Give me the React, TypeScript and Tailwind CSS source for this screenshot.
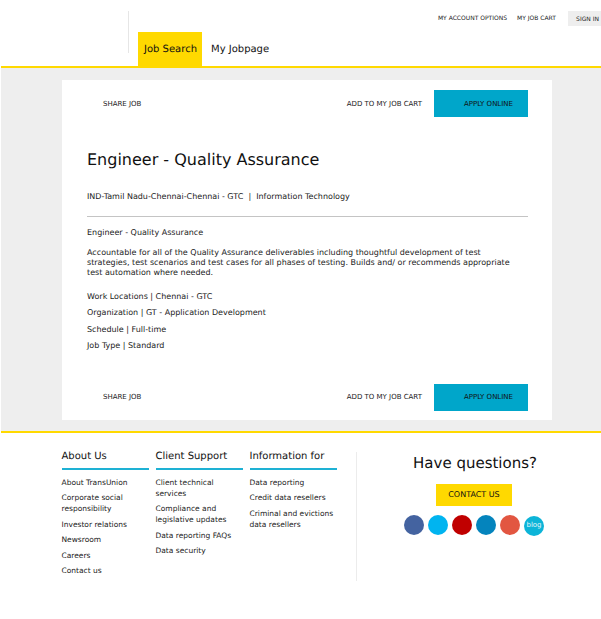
import React from 'react';

const ActionBar = ({ className }: { className: string }) => (
  <div className={`flex items-center ${className}`}>
    <span className="ml-[16px] pt-[1px] text-[7px] text-[#222222]">SHARE JOB</span>
    <span className="ml-auto mr-[12px] pt-[1px] text-[7px] text-[#222222]">ADD TO MY JOB CART</span>
    <div className="w-[94px] h-[27px] bg-[#00a6ca] flex items-center justify-end pr-[15px] pt-[1px] text-[7px] text-[#111111]">APPLY ONLINE</div>
  </div>
);

const FooterColumn = ({ title, links }: { title: string; links: string[] }) => (
  <div className="w-[87px] mr-[7px]">
    <h4 className="text-[10px] leading-[12px] text-[#111111] pb-[5px] border-b-2 border-[#1eb1d4] mb-[7px]">{title}</h4>
    <ul className="flex flex-col gap-[4.5px]">
      {links.map(l => (
        <li key={l} className="text-[7.5px] leading-[11px] text-[#222222]">{l}</li>
      ))}
    </ul>
  </div>
);

const App: React.FC = () => {
  const socials = ['#4463a0', '#00b4f0', '#c00000', '#0484bd', '#e25641'];

  return (
    <div className="font-['DejaVu_Sans',sans-serif] [text-rendering:geometricPrecision] w-[601px] h-[619px] pl-px bg-white overflow-hidden">
      {/* Header */}
      <header className="h-[68px] border-b-2 border-[#ffd900] relative">
        <div className="absolute left-[127px] top-[11px] h-[42px] w-px bg-[#e6e6e6]"></div>
        <div className="absolute right-0 top-[11px] flex items-start text-[6px] text-[#222222]">
          <span className="mr-[10px] mt-[3px]">MY ACCOUNT OPTIONS</span>
          <span className="mr-[12px] mt-[3px]">MY JOB CART</span>
          <span className="w-[33px] h-[15px] bg-[#eeeeee] flex items-center justify-end pr-[2px] pt-[1px]">SIGN IN</span>
        </div>
        <nav className="flex pl-[137px] pt-[32px] text-[10px] text-[#111111]">
          <div className="w-[64px] h-[34px] bg-[#ffd900] flex items-center justify-center pt-[1px] pl-[1px]">Job Search</div>
          <div className="h-[34px] ml-[9px] flex items-center pt-[1px]">My Jobpage</div>
        </nav>
      </header>

      {/* Job posting */}
      <main className="bg-[#eeeeee] h-[363px] pt-[12px]">
        <div className="ml-[61px] w-[490px] h-[340px] bg-white pl-[25px] pr-[24px] pt-[10px] flex flex-col">
          <ActionBar className="h-[27px]" />
          <h1 className="mt-[33px] text-[16px] leading-[20px] text-[#111111]">Engineer - Quality Assurance</h1>
          <p className="mt-[20.5px] text-[8px] leading-[12px] text-[#222222]">IND-Tamil Nadu-Chennai-Chennai - GTC &nbsp;|&nbsp; Information Technology</p>
          <div className="mt-[13.5px] border-t border-[#c4c4c4]"></div>
          <p className="mt-[10px] text-[8px] leading-[12px] text-[#222222]">Engineer - Quality Assurance</p>
          <p className="mt-[9px] w-[430px] text-[8px] leading-[10px] text-[#222222]">Accountable for all of the Quality Assurance deliverables including thoughtful development of test strategies, test scenarios and test cases for all phases of testing. Builds and/ or recommends appropriate test automation where needed.</p>
          <p className="mt-[12.5px] text-[8px] leading-[12px] text-[#222222]">Work Locations | Chennai - GTC</p>
          <p className="mt-[4.5px] text-[8px] leading-[12px] text-[#222222]">Organization | GT - Application Development</p>
          <p className="mt-[4.5px] text-[8px] leading-[12px] text-[#222222]">Schedule | Full-time</p>
          <p className="mt-[4.5px] text-[8px] leading-[12px] text-[#222222]">Job Type | Standard</p>
          <ActionBar className="h-[27px] mt-[31.5px]" />
        </div>
      </main>

      {/* Footer */}
      <footer className="border-t-2 border-[#ffd900] flex pl-[60.5px] pt-[17.5px]">
        <FooterColumn title="About Us" links={['About TransUnion', 'Corporate social responsibility', 'Investor relations', 'Newsroom', 'Careers', 'Contact us']} />
        <FooterColumn title="Client Support" links={['Client technical services', 'Compliance and legislative updates', 'Data reporting FAQs', 'Data security']} />
        <FooterColumn title="Information for" links={['Data reporting', 'Credit data resellers', 'Criminal and evictions data resellers']} />
        <div className="ml-[12.5px] h-[129px] mt-[1.5px] w-[188px] border-l border-[#ececec] flex flex-col items-center pl-[47px]">
          <h3 className="mt-[0.5px] ml-[2px] text-[15px] leading-[20px] text-[#111111] whitespace-nowrap">Have questions?</h3>
          <div className="mt-[11px] w-[76px] h-[22px] bg-[#ffd900] flex items-center justify-center text-[8px] text-[#111111]">CONTACT US</div>
          <div className="mt-[9px] flex items-start gap-[4px]">
            {socials.map(c => (
              <span key={c} className="w-[20px] h-[20px] rounded-full" style={{ backgroundColor: c }}></span>
            ))}
            <span className="w-[20px] h-[20px] mt-px rounded-full bg-[#0cb4d8] flex items-center justify-center text-[7px] text-[#e0f5fa]">blog</span>
          </div>
        </div>
      </footer>
    </div>
  );
};

export default App;
